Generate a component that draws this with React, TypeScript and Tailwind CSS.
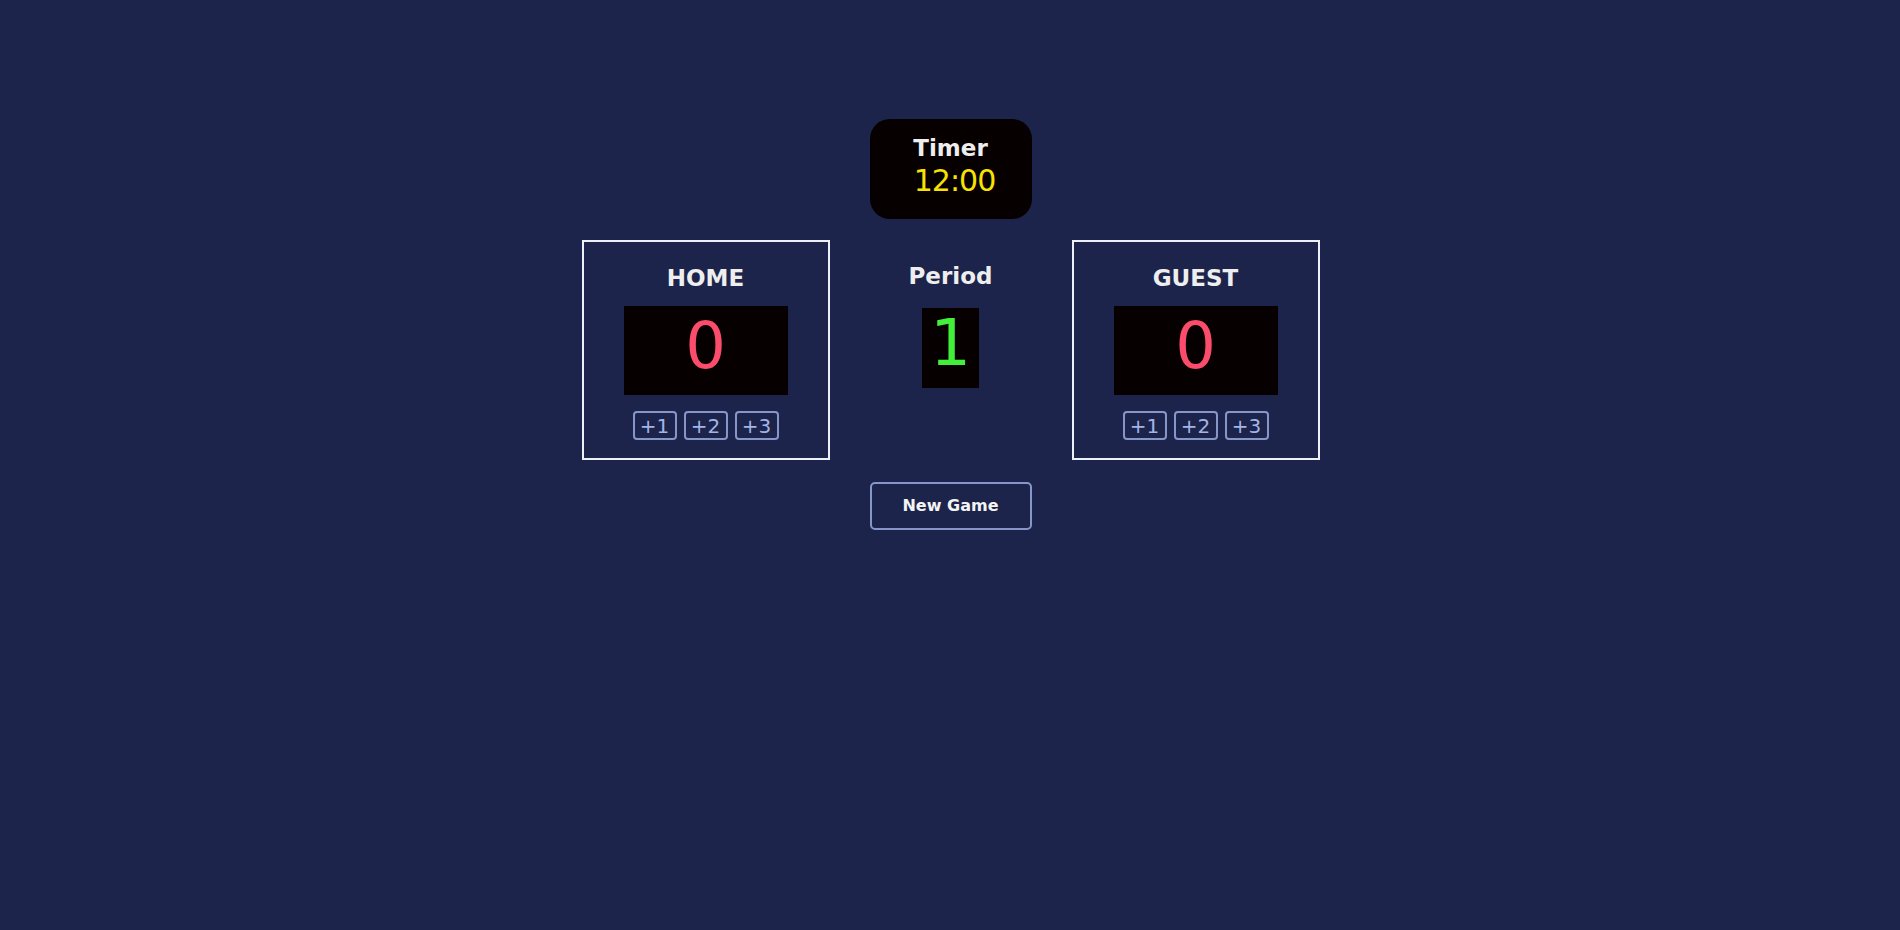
const digitFont = { fontFamily: '"DejaVu Sans", Verdana, sans-serif' }

function TeamPanel({ name }: { name: string }) {
  return (
    <div className="w-[248px] border-2 border-[#eef0f8] flex flex-col items-center pt-[25px] pb-[18px]">
      <h2 className="text-[23px] leading-none font-bold text-[#eeeeee]">{name}</h2>
      <div className="mt-[16px] w-[164px] h-[89px] bg-[#070000] flex justify-center items-start pt-[8px]">
        <span className="text-[64px] leading-none text-[#fb4d6b]" style={digitFont}>
          0
        </span>
      </div>
      <div className="mt-[16px] flex gap-[7px]">
        {["+1", "+2", "+3"].map((label) => (
          <button
            key={label}
            className="w-[44px] h-[29px] rounded-[4px] border-2 border-[#8796c9] text-[20px] leading-none text-[#a3b4e6] flex items-center justify-center"
          >
            {label}
          </button>
        ))}
      </div>
    </div>
  )
}

export default function App() {
  return (
    <div
      className="min-h-screen bg-[#1c244b] flex flex-col items-center pt-[119px] pl-px"
      style={{ fontFamily: 'Verdana, "DejaVu Sans", sans-serif' }}
    >
      {/* Timer */}
      <div className="w-[162px] h-[100px] rounded-[20px] bg-[#060000] flex flex-col items-center pt-[18px]">
        <h1 className="text-[23px] leading-none font-bold text-[#eeeeee]">Timer</h1>
        <span className="mt-[6px] ml-[8px] text-[30px] leading-none tracking-[-1px] text-[#f7e200]" style={digitFont}>
          12:00
        </span>
      </div>

      {/* Scoreboard */}
      <div className="mt-[21px] flex items-start">
        <TeamPanel name="HOME" />
        <div className="w-[242px] flex flex-col items-center pt-[25px]">
          <h2 className="text-[23px] leading-none font-bold text-[#eeeeee]">Period</h2>
          <div className="mt-[20px] w-[57px] h-[80px] bg-[#070000] flex justify-center items-start pt-[3px]">
            <span className="text-[64px] leading-none text-[#42ef3a]" style={digitFont}>
              1
            </span>
          </div>
        </div>
        <TeamPanel name="GUEST" />
      </div>

      <button className="mt-[22px] w-[162px] h-[48px] rounded-[5px] border-2 border-[#8796c9] text-[16px] font-bold text-[#f4f4f4]">
        New Game
      </button>
    </div>
  )
}
